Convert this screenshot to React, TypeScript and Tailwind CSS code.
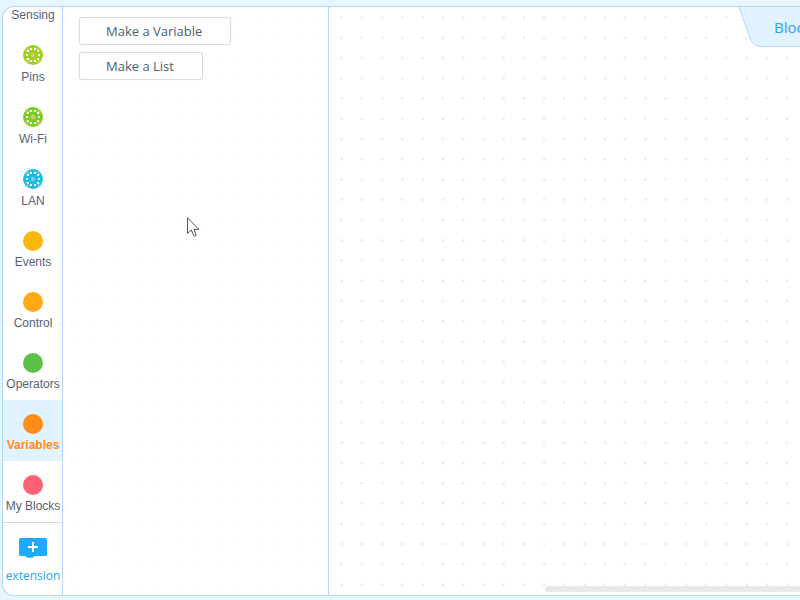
import { useState } from "react";
import clsx from "clsx";

type Category = {
  id: string;
  label: string;
  color: string;
  ring?: string;
};

const categories: Category[] = [
  { id: "sensing", label: "Sensing", color: "#9fd01c", ring: "#d9c878" },
  { id: "pins", label: "Pins", color: "#9fd01c", ring: "#d9c878" },
  { id: "wifi", label: "Wi-Fi", color: "#74d01c", ring: "#d9c878" },
  { id: "lan", label: "LAN", color: "#17c0de", ring: "#7fc4f4" },
  { id: "events", label: "Events", color: "#fcb70d" },
  { id: "control", label: "Control", color: "#ffa914" },
  { id: "operators", label: "Operators", color: "#5cc149" },
  { id: "variables", label: "Variables", color: "#ff8c1a" },
  { id: "myblocks", label: "My Blocks", color: "#ff6274" },
];

// Board icon: coloured disc with a ring of light pads
function BoardIcon({ color, ring }: { color: string; ring: string }) {
  const pads = [
    [7, 3], [11, 3], [4, 5], [14, 5], [3, 9], [15, 9],
    [4, 13], [14, 13], [7, 15], [11, 15],
  ];
  const holes = [45, 135, 225, 315];
  return (
    <svg viewBox="0 0 20 20" className="mb-px size-5" aria-hidden="true">
      <circle cx="10" cy="10" r="10" fill={color} />
      {holes.map(deg => (
        <path
          key={deg}
          d="M17.2 7.4Q19.4 10 17.2 12.6"
          fill="none"
          stroke={ring}
          strokeWidth="1.3"
          transform={`rotate(${deg} 10 10)`}
        />
      ))}
      {pads.map(([x, y]) => (
        <rect key={`${x}-${y}`} x={x} y={y} width="2" height="2" fill="#fff" />
      ))}
      <circle cx="10" cy="10" r="2.2" fill={ring} />
    </svg>
  );
}

function DotGrid({ id, color }: { id: string; color: string }) {
  return (
    <svg className="absolute inset-0 size-full" aria-hidden="true">
      <defs>
        <pattern id={id} width="20.25" height="20.25" patternUnits="userSpaceOnUse" x="2.4" y="0.4">
          <rect x="9.2" y="9.1" width="2" height="2" fill={color} />
        </pattern>
      </defs>
      <rect width="100%" height="100%" fill={`url(#${id})`} />
    </svg>
  );
}

function FlyoutButton({ children }: { children: string }) {
  return (
    <button className="h-7 rounded-[3px] border border-[#dcdcdc] bg-white pr-7 pl-[26px] text-[13px] leading-5 text-[#4c6072] shadow-[0_0_1px_#d8d8d8]">
      {children}
    </button>
  );
}

export default function App() {
  const [active, setActive] = useState("variables");

  return (
    <div className="h-screen overflow-hidden bg-[#e6f5fe] pt-[6px] pb-1 pl-[2px] font-['Open_Sans',sans-serif]">
      <div className="relative flex h-full overflow-hidden rounded-l-xl border border-r-0 border-[#b3d6fb] bg-white">
        {/* Categories */}
        <nav className="flex w-[60px] shrink-0 flex-col border-r border-[#b3d6fb]">
          <div className="flex min-h-0 flex-1 flex-col justify-end overflow-hidden">
            {categories.map(c => (
              <button
                key={c.id}
                onClick={() => setActive(c.id)}
                className={clsx(
                  "flex shrink-0 flex-col items-center pt-[14px] pb-2 pl-px font-['Liberation_Sans',sans-serif] text-xs leading-4 whitespace-nowrap",
                  active === c.id ? "bg-[#e0f3fe] font-bold text-[#ff8c1a]" : "text-[#575e75]"
                )}
              >
                {c.ring ? (
                  <BoardIcon color={c.color} ring={c.ring} />
                ) : (
                  <span className="size-5 rounded-full" style={{ backgroundColor: c.color }} />
                )}
                <span className="mt-[3px]">{c.label}</span>
              </button>
            ))}
          </div>
          <button className="flex h-[73px] shrink-0 flex-col items-center border-t border-[#d9d9d9] pt-[15px] pl-px text-xs leading-5 text-[#26a5f2]">
            <svg viewBox="0 0 28 20" className="h-5 w-7" aria-hidden="true">
              <path
                d="M1.5 0H26.5A1.5 1.5 0 0 1 28 1.5V16.5A1.5 1.5 0 0 1 26.5 18H15.5L14 19.2Q13.5 19.7 12.8 19.7H9Q8.2 19.7 7.6 19.2L6.2 18H1.5A1.5 1.5 0 0 1 0 16.5V1.5A1.5 1.5 0 0 1 1.5 0Z"
                fill="#1eabff"
              />
              <path d="M14 4V14M9 9H19" stroke="#fff" strokeWidth="2" />
            </svg>
            <span className="mt-2">extension</span>
          </button>
        </nav>

        {/* Flyout */}
        <section className="relative w-[266px] shrink-0 border-r border-[#b3d6fb]">
          <DotGrid id="flyout-dots" color="#fafafa" />
          <div className="relative flex flex-col items-start gap-[7px] pt-[10px] pl-4">
            <FlyoutButton>Make a Variable</FlyoutButton>
            <FlyoutButton>Make a List</FlyoutButton>
          </div>
        </section>

        {/* Workspace */}
        <main className="relative min-w-0 flex-1">
          <DotGrid id="workspace-dots" color="#e2e2e2" />
          <div className="absolute right-0 bottom-[3px] h-[6px] w-[255px] rounded-l-full bg-[#e9e9e9]" />
          <button className="absolute top-0 right-0 h-10 w-[62px] overflow-hidden text-left text-[15px] leading-5 text-[#26a5f2]">
            <svg viewBox="0 0 62 40" className="absolute inset-0 h-10 w-[62px]" aria-hidden="true">
              <path
                d="M0.5 -1L12 31Q15 39.5 22.5 39.5H64V-1Z"
                fill="#e0f3fe"
                stroke="#b3d6fb"
              />
            </svg>
            <span className="relative pl-9">Blocks</span>
          </button>
        </main>

        <svg viewBox="0 0 13 20" className="absolute top-[210px] left-[184px] h-5 w-[13px]" aria-hidden="true">
          <path
            d="M0.5 0.8V16.5L4.2 13L6.8 18.6Q7.8 19.4 9.2 18.3L7 12.3H11.8Z"
            fill="#fff"
            stroke="#4f5066"
          />
        </svg>
      </div>
    </div>
  );
}
